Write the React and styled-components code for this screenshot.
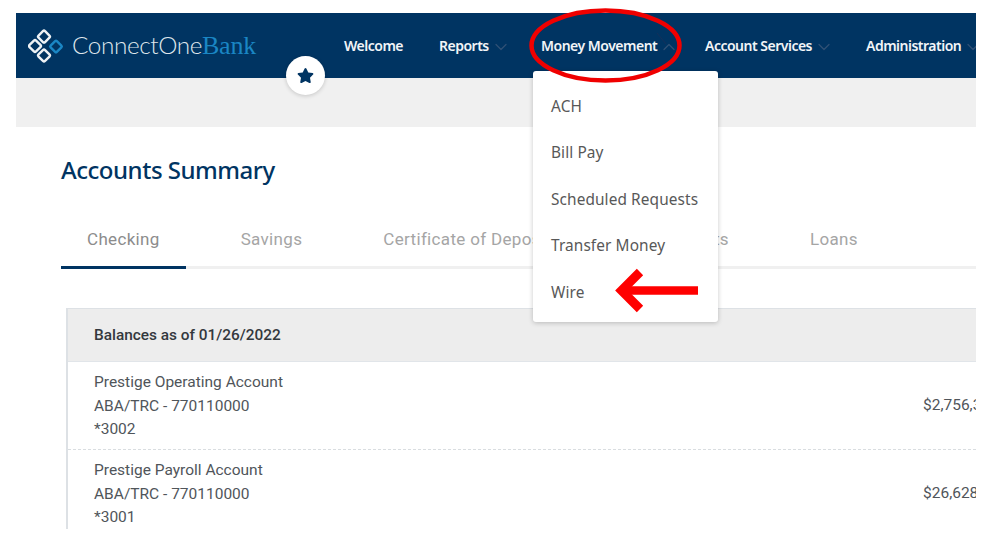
import React from 'react';
import styled, { createGlobalStyle } from 'styled-components';
import { FaStar } from 'react-icons/fa';
import { ChevronDown, ChevronUp } from 'lucide-react';

const GlobalStyle = createGlobalStyle`
  html, body {
    margin: 0;
    background: #fff;
    font-family: 'Roboto', sans-serif;
  }
`

const Page = styled.div`
  position: relative;
  width: 1004px;
  height: 552px;
  overflow: hidden;
  padding: 13px 28px 23px 16px;
  box-sizing: border-box;
`

const Frame = styled.div`
  position: relative;
  height: 516px;
  overflow: hidden;
`

const Header = styled.header`
  height: 65px;
  background: #003462;
  display: flex;
  align-items: center;
  padding-left: 12px;
`

const Logo = styled.div`
  display: flex;
  align-items: center;
  gap: 6px;
  width: 316px;
  flex: none;
`

const LogoText = styled.span`
  font-family: 'Lato', sans-serif;
  font-size: 24.3px;
  font-weight: 300;
  color: #dfe6ec;
  letter-spacing: -0.4px;
`

const LogoBank = styled.span`
  font-family: 'Liberation Serif', serif;
  font-size: 26px;
  color: #1a86c4;
  letter-spacing: -0.2px;
`

const Nav = styled.nav`
  display: flex;
  align-items: center;
  white-space: nowrap;
`

const NavItem = styled.div`
  display: flex;
  align-items: center;
  gap: 2px;
  width: ${props => props.$width}px;
  flex: none;
  font-family: 'Noto Sans', sans-serif;
  font-size: 14px;
  font-weight: 600;
  letter-spacing: -0.5px;
  color: #f2f5f8;
  svg {
    color: #2f5075;
    flex: none;
    margin-top: 2px;
  }
`

const StarButton = styled.div`
  position: absolute;
  left: 270px;
  top: 43px;
  width: 39px;
  height: 39px;
  border-radius: 50%;
  background: #fff;
  box-shadow: 0 1px 4px rgba(0, 0, 0, .18);
  display: flex;
  align-items: center;
  justify-content: center;
  color: #003462;
  font-size: 17px;
`

const Band = styled.div`
  height: 49px;
  background: #f0f0f0;
`

const Content = styled.main`
  padding: 26px 0 0 45px;
`

const Title = styled.h1`
  margin: 0;
  font-family: 'Noto Sans', sans-serif;
  font-size: 24px;
  line-height: 33px;
  font-weight: 500;
  letter-spacing: -0.48px;
  color: #003462;
`

const Tabs = styled.div`
  display: flex;
  gap: 29px;
  height: 64px;
  margin-top: 19px;
  box-sizing: border-box;
  border-bottom: 3px solid #f0f0f0;
`

const Tab = styled.div`
  flex: none;
  height: 64px;
  box-sizing: border-box;
  padding: 22px 26px 0;
  font-size: 17px;
  line-height: 24px;
  letter-spacing: 0.33px;
  color: ${props => props.$active ? '#8c8c8c' : '#a5a5a5'};
  border-bottom: 3px solid ${props => props.$active ? '#003462' : 'transparent'};
`

const Table = styled.section`
  margin: 39px 0 0 5px;
  border-left: 2px solid #dde1e5;
`

const TableHead = styled.div`
  height: 54px;
  box-sizing: border-box;
  display: flex;
  align-items: center;
  padding-left: 26px;
  background: #ededed;
  border-top: 1px solid #dde1e5;
  border-bottom: 1px solid #e1e5e9;
  font-size: 15.4px;
  font-weight: 500;
  color: #33383d;
`

const Row = styled.div`
  height: 88px;
  box-sizing: border-box;
  padding: 9px 0 0 26px;
  display: flex;
  justify-content: space-between;
  align-items: flex-start;
  border-bottom: 1px dashed #d9dde0;
  font-size: 15.5px;
  line-height: 23.5px;
  color: #50555a;
`

const AccountInfo = styled.div`
  display: flex;
  flex-direction: column;
`

const Amount = styled.div`
  width: 53px;
  margin-top: 23px;
  white-space: nowrap;
`

const Menu = styled.ul`
  position: absolute;
  left: 517px;
  top: 58px;
  width: 185px;
  height: 251px;
  box-sizing: border-box;
  margin: 0;
  padding: 12.5px 0 0 18px;
  list-style: none;
  background: #fff;
  border-radius: 3px;
  box-shadow: 0 1px 5px rgba(0, 0, 0, .22);
  li {
    height: 46.5px;
    line-height: 46.5px;
    font-family: 'Noto Sans', sans-serif;
    font-size: 15.4px;
    letter-spacing: 0.1px;
    color: #585858;
    white-space: nowrap;
  }
`

const Annotation = styled.svg`
  position: absolute;
  left: 0;
  top: 0;
  width: 1004px;
  height: 552px;
  pointer-events: none;
`

const accounts = [
  { name: 'Prestige Operating Account', mask: '*3002', amount: '$2,756,3' },
  { name: 'Prestige Payroll Account', mask: '*3001', amount: '$26,628' },
]

const menuItems = ['ACH', 'Bill Pay', 'Scheduled Requests', 'Transfer Money', 'Wire']

function App() {
  return (
    <Page>
      <GlobalStyle />
      <Frame>
        <Header>
          <Logo>
            <svg width="38" height="38" viewBox="0 0 38 38" fill="none" strokeWidth="2.4">
              <g stroke="#eef2f5">
                <rect x="11.400" y="5" width="9.200" height="9.200" rx="1.500" transform="rotate(45 16 9.600)" />
                <rect x="2.400" y="14.400" width="9.200" height="9.200" rx="1.500" transform="rotate(45 7 19)" />
                <rect x="11.400" y="23.900" width="9.200" height="9.200" rx="1.500" transform="rotate(45 16 28.500)" />
              </g>
              <rect x="23.600" y="15.100" width="8.800" height="8.800" rx="1.200" transform="rotate(45 28 19.500)" stroke="#1a86c4" />
            </svg>
            <LogoText>ConnectOne<LogoBank>Bank</LogoBank></LogoText>
          </Logo>
          <Nav>
            <NavItem $width={95}>Welcome</NavItem>
            <NavItem $width={102}>Reports<ChevronDown size={20} strokeWidth={1.5} /></NavItem>
            <NavItem $width={164}>Money Movement<ChevronUp size={20} strokeWidth={1.5} /></NavItem>
            <NavItem $width={161}>Account Services<ChevronDown size={20} strokeWidth={1.5} /></NavItem>
            <NavItem $width={120}>Administration<ChevronDown size={20} strokeWidth={1.5} /></NavItem>
          </Nav>
        </Header>
        <StarButton><FaStar /></StarButton>
        <Band />
        <Content>
          <Title>Accounts Summary</Title>
          <Tabs>
            <Tab $active>Checking</Tab>
            <Tab>Savings</Tab>
            <Tab>Certificate of Deposit</Tab>
            <Tab>Investments</Tab>
            <Tab>Loans</Tab>
          </Tabs>
          <Table>
            <TableHead>Balances as of 01/26/2022</TableHead>
            {accounts.map(account => (
              <Row key={account.mask}>
                <AccountInfo>
                  <span>{account.name}</span>
                  <span>ABA/TRC - 770110000</span>
                  <span>{account.mask}</span>
                </AccountInfo>
                <Amount>{account.amount}</Amount>
              </Row>
            ))}
          </Table>
        </Content>
        <Menu>
          {menuItems.map(item => <li key={item}>{item}</li>)}
        </Menu>
      </Frame>
      <Annotation viewBox="0 0 1004 552" fill="none">
        <path d="M657 33L666 44" stroke="#14305a" strokeWidth="1" />
        <ellipse cx="605.500" cy="45.500" rx="74" ry="35" stroke="#f00000" strokeWidth="4.500" />
        <path d="M698 290.500H626" stroke="#ff0000" strokeWidth="8.500" />
        <path d="M640 272L621.500 290.500L640 309" stroke="#ff0000" strokeWidth="9" />
      </Annotation>
    </Page>
  )
}

export default App;
